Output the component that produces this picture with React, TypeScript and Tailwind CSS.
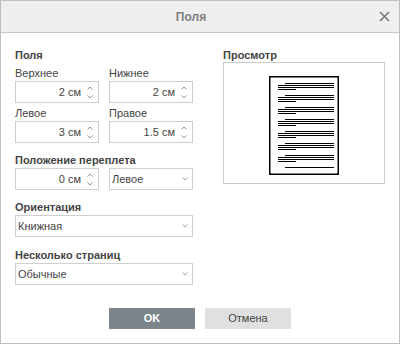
import React from 'react';

const SpinInput = ({ value }: { value: string }) => (
  <div className="flex h-[22px] items-center border border-[#cfcfcf] bg-white">
    <span className="flex-1 pr-[3px] text-right">{value}</span>
    <div className="flex w-[14px] flex-col items-center gap-[5px] pr-[2px]">
      <svg width="6" height="4" viewBox="0 0 6 4">
        <path d="M0.5 3.5 L3 1 L5.5 3.5" fill="none" stroke="#888" strokeWidth="0.9" />
      </svg>
      <svg width="6" height="4" viewBox="0 0 6 4">
        <path d="M0.5 0.5 L3 3 L5.5 0.5" fill="none" stroke="#888" strokeWidth="0.9" />
      </svg>
    </div>
  </div>
);

const Select = ({ value }: { value: string }) => (
  <div className="flex h-[22px] items-center border border-[#cfcfcf] bg-white pl-[2px] pr-[4px]">
    <span className="flex-1">{value}</span>
    <svg width="6" height="4" viewBox="0 0 6 4">
      <path d="M0.5 0.5 L3 3 L5.5 0.5" fill="none" stroke="#999" strokeWidth="0.9" />
    </svg>
  </div>
);

const Label = ({ children, bold }: { children: React.ReactNode; bold?: boolean }) => (
  <div className={`leading-[14px] ${bold ? 'font-bold' : ''}`}>{children}</div>
);

// схематичная страница в блоке просмотра
const PagePreview = () => {
  const groups = [0, 1, 2, 3, 4, 5, 6];
  return (
    <svg width="70" height="99" viewBox="0 0 70 99">
      <rect x="0.75" y="0.75" width="68.5" height="97.5" fill="white" stroke="black" strokeWidth="1.5" />
      {groups.map((g) => {
        const y = 7 + g * 12;
        return (
          <g key={g} fill="black">
            <rect x="16" y={y} width="49" height="1" />
            <rect x="9" y={y + 2} width="56" height="1" />
            <rect x="9" y={y + 4} width="56" height="1" />
            <rect x="9" y={y + 6} width="18" height="1" />
          </g>
        );
      })}
      <rect x="16" y="91" width="49" height="1" fill="black" />
    </svg>
  );
};

export default function App() {
  return (
    <div className="flex h-[344px] w-[400px] flex-col border border-[#bfbfbf] bg-white font-['Liberation_Sans',Arial,sans-serif] text-[11px] text-[#444]">
      {/* Header */}
      <div className="flex h-[32px] shrink-0 items-center border-b border-[#c8c8c8] bg-[#efefef]">
        <div className="flex-1 pl-[12px] text-center text-[12px] font-bold text-[#808080]">Поля</div>
        <div className="flex w-[30px] items-center justify-center">
          <svg width="11" height="11" viewBox="0 0 11 11">
            <path d="M1 1 L10 10 M10 1 L1 10" stroke="#777" strokeWidth="1.6" />
          </svg>
        </div>
      </div>

      {/* Body */}
      <div className="flex px-[14px] pt-[15px]">
        <div className="flex w-[178px] flex-col">
          <Label bold>Поля</Label>
          <div className="mt-[4px] grid grid-cols-2 gap-x-[10px]">
            <div>
              <Label>Верхнее</Label>
              <div className="mt-[1px]">
                <SpinInput value="2 см" />
              </div>
            </div>
            <div>
              <Label>Нижнее</Label>
              <div className="mt-[1px]">
                <SpinInput value="2 см" />
              </div>
            </div>
            <div className="mt-[3px]">
              <Label>Левое</Label>
              <div className="mt-[1px]">
                <SpinInput value="3 см" />
              </div>
            </div>
            <div className="mt-[3px]">
              <Label>Правое</Label>
              <div className="mt-[1px]">
                <SpinInput value="1.5 см" />
              </div>
            </div>
          </div>

          <div className="mt-[10px]">
            <Label bold>Положение переплета</Label>
          </div>
          <div className="mt-[1px] grid grid-cols-2 gap-x-[10px]">
            <SpinInput value="0 см" />
            <Select value="Левое" />
          </div>

          <div className="mt-[10px]">
            <Label bold>Ориентация</Label>
          </div>
          <div className="mt-[1px]">
            <Select value="Книжная" />
          </div>

          <div className="mt-[11px]">
            <Label bold>Несколько страниц</Label>
          </div>
          <div className="mt-[1px]">
            <Select value="Обычные" />
          </div>
        </div>

        <div className="ml-auto flex w-[162px] flex-col">
          <Label bold>Просмотр</Label>
          <div className="flex h-[122px] justify-center border border-[#cbcbcb] pt-[13px]">
            <PagePreview />
          </div>
        </div>
      </div>

      {/* Buttons */}
      <div className="mt-[23px] flex justify-center gap-[10px]">
        <button className="h-[21px] w-[86px] bg-[#7d858c] font-bold text-white">OK</button>
        <button className="h-[21px] w-[86px] bg-[#e0e0e0] text-[#444]">Отмена</button>
      </div>
    </div>
  );
}
